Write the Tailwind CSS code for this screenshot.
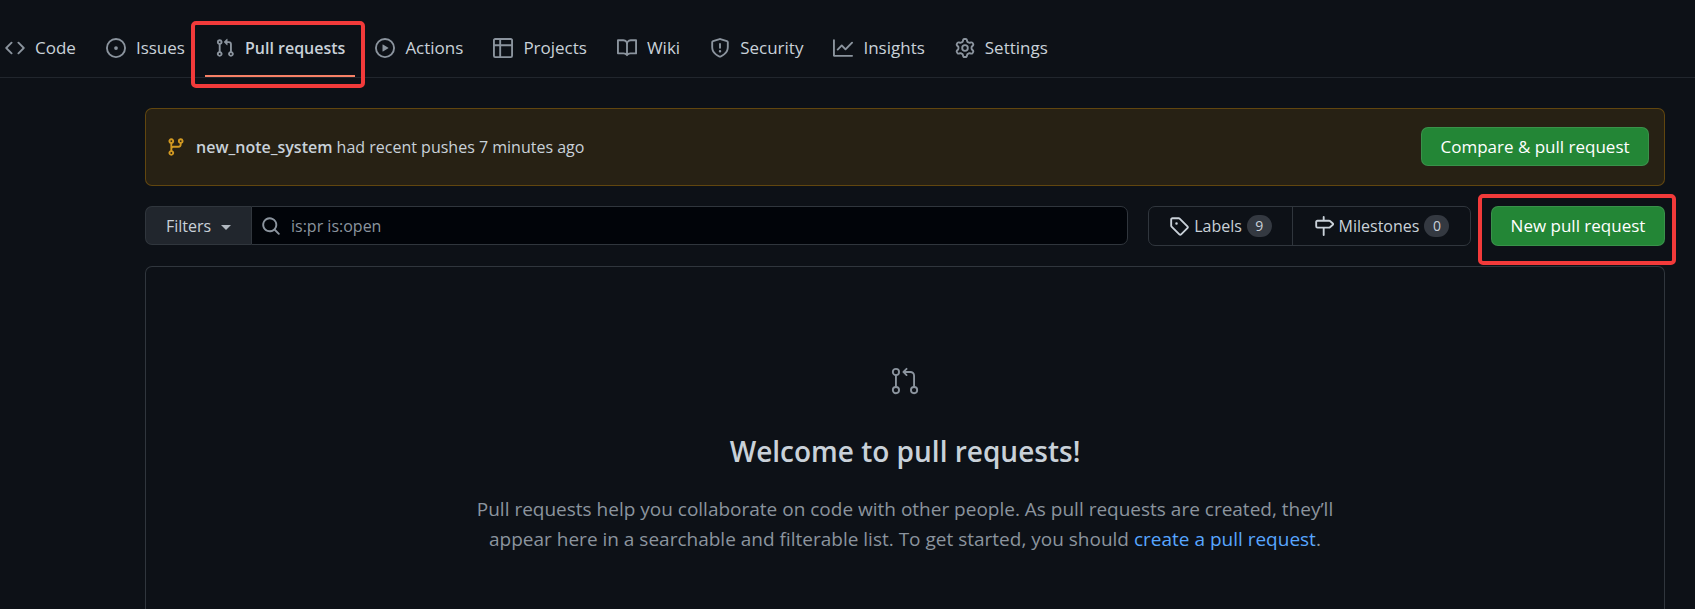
<!DOCTYPE html>
<html lang="en">
<head>
<meta charset="utf-8">
<meta name="viewport" content="width=device-width, initial-scale=1">
<title>Pull requests</title>
<script src="https://cdn.jsdelivr.net/npm/@tailwindcss/browser@4"></script>
</head>
<body class="flex min-h-screen flex-col bg-[#0d1117] font-['Open_Sans','Noto_Sans',sans-serif] text-base text-[#c9d1d9]">

<nav aria-label="Repository" class="-ml-[5px] flex items-end gap-[10px] border-b border-[#21262d] pt-[19px] text-[17px] whitespace-nowrap">
  <a href="#" class="flex h-[58px] items-center gap-[10px] px-[10px]">
    <svg class="size-5 fill-[#8b949e]" viewBox="0 0 16 16" aria-hidden="true"><path d="M4.72 3.22a.75.75 0 011.06 1.06L2.06 8l3.72 3.72a.75.75 0 11-1.06 1.06L.47 8.53a.75.75 0 010-1.06l4.25-4.25zm6.56 0a.75.75 0 10-1.06 1.06L13.94 8l-3.72 3.72a.75.75 0 101.06 1.06l4.25-4.25a.75.75 0 000-1.06l-4.25-4.25z"/></svg>
    <span>Code</span>
  </a>
  <a href="#" class="flex h-[58px] items-center gap-[10px] px-[10px]">
    <svg class="size-5 fill-[#8b949e]" viewBox="0 0 16 16" aria-hidden="true"><path d="M8 9.5a1.5 1.5 0 100-3 1.5 1.5 0 000 3z"/><path fill-rule="evenodd" d="M8 0a8 8 0 100 16A8 8 0 008 0zM1.5 8a6.5 6.5 0 1113 0 6.5 6.5 0 01-13 0z"/></svg>
    <span>Issues</span>
  </a>
  <a href="#" aria-current="page" class="relative flex h-[58px] items-center gap-[10px] px-[10px] text-base font-semibold">
    <svg class="size-5 fill-[#8b949e]" viewBox="0 0 16 16" aria-hidden="true"><path fill-rule="evenodd" d="M7.177 3.073L9.573.677A.25.25 0 0110 .854v4.792a.25.25 0 01-.427.177L7.177 3.427a.25.25 0 010-.354zM3.75 2.5a.75.75 0 100 1.5.75.75 0 000-1.5zm-2.25.75a2.25 2.25 0 113 2.122v5.256a2.251 2.251 0 11-1.5 0V5.372A2.25 2.25 0 011.5 3.25zM11 2.5h-1V4h1a1 1 0 011 1v5.628a2.251 2.251 0 101.5 0V5A2.5 2.5 0 0011 2.5zm1 10.25a.75.75 0 111.5 0 .75.75 0 01-1.5 0zM3.75 12a.75.75 0 100 1.5.75.75 0 000-1.5z"/></svg>
    <span>Pull requests</span>
    <span class="absolute inset-x-0 bottom-0 h-[2px] bg-[#f78166]"></span>
    <span class="absolute top-[2px] -right-[10px] -bottom-[11px] -left-[14px] rounded-[5px] border-4 border-[#f23a3a]"></span>
  </a>
  <a href="#" class="flex h-[58px] items-center gap-[10px] px-[10px]">
    <svg class="size-5 fill-[#8b949e]" viewBox="0 0 16 16" aria-hidden="true"><path fill-rule="evenodd" d="M1.5 8a6.5 6.5 0 1113 0 6.5 6.5 0 01-13 0zM8 0a8 8 0 100 16A8 8 0 008 0zM6.379 5.227A.25.25 0 006 5.442v5.117a.25.25 0 00.379.214l4.264-2.559a.25.25 0 000-.428L6.379 5.227z"/></svg>
    <span>Actions</span>
  </a>
  <a href="#" class="flex h-[58px] items-center gap-[10px] px-[10px]">
    <svg class="size-5 fill-[#8b949e]" viewBox="0 0 16 16" aria-hidden="true"><path fill-rule="evenodd" d="M0 1.75C0 .784.784 0 1.75 0h12.5C15.216 0 16 .784 16 1.75v3.585a.746.746 0 010 .83v8.085A1.75 1.75 0 0114.25 16H6.309a.748.748 0 01-1.118 0H1.75A1.75 1.75 0 010 14.25V6.165a.746.746 0 010-.83V1.75zM1.5 6.5v7.75c0 .138.112.25.25.25H5v-8H1.5zM5 5H1.5V1.75a.25.25 0 01.25-.25H5V5zm1.5 1.5v8h7.75a.25.25 0 00.25-.25V6.5h-8zm8-1.5h-8V1.5h7.75a.25.25 0 01.25.25V5z"/></svg>
    <span>Projects</span>
  </a>
  <a href="#" class="flex h-[58px] items-center gap-[10px] px-[10px]">
    <svg class="size-5 fill-[#8b949e]" viewBox="0 0 16 16" aria-hidden="true"><path fill-rule="evenodd" d="M0 1.75A.75.75 0 01.75 1h4.253c1.227 0 2.317.59 3 1.501A3.744 3.744 0 0111.006 1h4.245a.75.75 0 01.75.75v10.5a.75.75 0 01-.75.75h-4.507a2.25 2.25 0 00-1.591.659l-.622.621a.75.75 0 01-1.06 0l-.622-.621A2.25 2.25 0 005.258 13H.75a.75.75 0 01-.75-.75V1.75zm8.755 3a2.25 2.25 0 012.25-2.25H14.5v9h-3.757c-.71 0-1.4.201-1.992.572l.004-7.322zm-1.504 7.324l.004-5.073-.002-2.253A2.25 2.25 0 005.003 2.5H1.5v9h3.757a3.75 3.75 0 011.994.574z"/></svg>
    <span>Wiki</span>
  </a>
  <a href="#" class="flex h-[58px] items-center gap-[10px] px-[10px]">
    <svg class="size-5 fill-[#8b949e]" viewBox="0 0 16 16" aria-hidden="true"><path fill-rule="evenodd" d="M7.467.133a1.75 1.75 0 011.066 0l5.25 1.68A1.75 1.75 0 0115 3.48V7c0 1.566-.32 3.182-1.303 4.682-.983 1.498-2.585 2.813-5.032 3.855a1.7 1.7 0 01-1.33 0c-2.447-1.042-4.049-2.357-5.032-3.855C1.32 10.182 1 8.566 1 7V3.48a1.75 1.75 0 011.217-1.667l5.25-1.68zm.61 1.429a.25.25 0 00-.153 0l-5.25 1.68a.25.25 0 00-.174.238V7c0 1.358.275 2.666 1.057 3.86.784 1.194 2.121 2.34 4.366 3.297a.2.2 0 00.154 0c2.245-.956 3.582-2.104 4.366-3.298C13.225 9.666 13.5 8.36 13.5 7V3.48a.25.25 0 00-.174-.237l-5.25-1.68zM9 10.5a1 1 0 11-2 0 1 1 0 012 0zm-.25-5.75a.75.75 0 10-1.5 0v3a.75.75 0 001.5 0v-3z"/></svg>
    <span>Security</span>
  </a>
  <a href="#" class="flex h-[58px] items-center gap-[10px] px-[10px]">
    <svg class="size-5 fill-[#8b949e]" viewBox="0 0 16 16" aria-hidden="true"><path fill-rule="evenodd" d="M1.5 1.75a.75.75 0 00-1.5 0v12.5c0 .414.336.75.75.75h14.5a.75.75 0 000-1.5H1.5V1.75zm14.28 2.53a.75.75 0 00-1.06-1.06L10 7.94 7.53 5.47a.75.75 0 00-1.06 0L3.22 8.72a.75.75 0 001.06 1.06L7 7.06l2.47 2.47a.75.75 0 001.06 0l5.25-5.25z"/></svg>
    <span>Insights</span>
  </a>
  <a href="#" class="flex h-[58px] items-center gap-[10px] px-[10px]">
    <svg class="size-5 fill-[#8b949e]" viewBox="0 0 16 16" aria-hidden="true"><path fill-rule="evenodd" d="M8 0a8.2 8.2 0 0 1 .701.031C9.444.095 9.99.645 10.16 1.29l.288 1.107c.018.066.079.158.212.224.231.114.454.243.668.386.123.082.233.09.299.071l1.103-.303c.644-.176 1.392.021 1.82.63.27.385.506.792.704 1.218.315.675.111 1.422-.364 1.891l-.814.806c-.049.048-.098.147-.088.294.016.257.016.515 0 .772-.01.147.038.246.088.294l.814.806c.475.469.679 1.216.364 1.891a7.977 7.977 0 0 1-.704 1.217c-.428.61-1.176.807-1.82.63l-1.102-.302c-.067-.019-.177-.011-.3.071a5.909 5.909 0 0 1-.668.386c-.133.066-.194.158-.211.224l-.29 1.106c-.168.646-.715 1.196-1.458 1.26a8.006 8.006 0 0 1-1.402 0c-.743-.064-1.289-.614-1.458-1.26l-.289-1.106c-.018-.066-.079-.158-.212-.224a5.738 5.738 0 0 1-.668-.386c-.123-.082-.233-.09-.299-.071l-1.103.303c-.644.176-1.392-.021-1.82-.63a8.12 8.12 0 0 1-.704-1.218c-.315-.675-.111-1.422.363-1.891l.815-.806c.05-.048.098-.147.088-.294a6.214 6.214 0 0 1 0-.772c.01-.147-.038-.246-.088-.294l-.815-.806C.635 6.045.431 5.298.746 4.623a7.92 7.92 0 0 1 .704-1.217c.428-.61 1.176-.807 1.82-.63l1.102.302c.067.019.177.011.3-.071.214-.143.437-.272.668-.386.133-.066.194-.158.211-.224l.29-1.106C6.009.645 6.556.095 7.299.03 7.53.01 7.764 0 8 0Zm-.571 1.525c-.036.003-.108.036-.137.146l-.289 1.105c-.147.561-.549.967-.998 1.189-.173.086-.34.183-.5.29-.417.278-.97.423-1.529.27l-1.103-.303c-.109-.03-.175.016-.195.045-.22.312-.412.644-.573.99-.014.031-.021.11.059.19l.815.806c.411.406.562.957.53 1.456a4.709 4.709 0 0 0 0 .582c.032.499-.119 1.05-.53 1.456l-.815.806c-.081.08-.073.159-.059.19.162.346.353.677.573.989.02.03.085.076.195.046l1.102-.303c.56-.153 1.113-.008 1.53.27.161.107.328.204.501.29.447.222.85.629.997 1.189l.289 1.105c.029.109.101.143.137.146a6.6 6.6 0 0 0 1.142 0c.036-.003.108-.036.137-.146l.289-1.105c.147-.561.549-.967.998-1.189.173-.086.34-.183.5-.29.417-.278.97-.423 1.529-.27l1.103.303c.109.029.175-.016.195-.045.22-.313.411-.644.573-.99.014-.031.021-.11-.059-.19l-.815-.806c-.411-.406-.562-.957-.53-1.456a4.709 4.709 0 0 0 0-.582c-.032-.499.119-1.05.53-1.456l.815-.806c.081-.08.073-.159.059-.19a6.464 6.464 0 0 0-.573-.989c-.02-.03-.085-.076-.195-.046l-1.102.303c-.56.153-1.113.008-1.53-.27a4.44 4.44 0 0 0-.501-.29c-.447-.222-.85-.629-.997-1.189l-.289-1.105c-.029-.11-.101-.143-.137-.146a6.6 6.6 0 0 0-1.142 0ZM11 8a3 3 0 1 1-6 0 3 3 0 0 1 6 0ZM9.5 8a1.5 1.5 0 1 0-3.001.001A1.5 1.5 0 0 0 9.5 8Z"/></svg>
    <span>Settings</span>
  </a>
</nav>

<main class="mr-[30px] ml-[145px] flex grow flex-col gap-5 pt-[30px]">
  <section class="flex items-center gap-[10px] rounded-[7px] border border-[#bb8009]/40 bg-[#bb8009]/15 pt-[18px] pr-[15px] pb-[19px] pl-5">
    <svg class="size-5 fill-[#d29922]" viewBox="0 0 16 16" aria-hidden="true"><path fill-rule="evenodd" d="M11.75 2.5a.75.75 0 100 1.5.75.75 0 000-1.5zm-2.25.75a2.25 2.25 0 113 2.122V6A2.5 2.5 0 0110 8.5H6a1 1 0 00-1 1v1.128a2.251 2.251 0 11-1.5 0V5.372a2.25 2.25 0 111.5 0v1.836A2.492 2.492 0 016 7h4a1 1 0 001-1v-.628A2.25 2.25 0 019.5 3.25zM4.25 12a.75.75 0 100 1.5.75.75 0 000-1.5zM3.5 3.25a.75.75 0 111.5 0 .75.75 0 01-1.5 0z"/></svg>
    <p class="grow"><strong class="font-semibold">new_note_system</strong> had recent pushes 7 minutes ago</p>
    <button type="button" class="h-[39px] w-[228px] rounded-[7px] border border-white/10 bg-[#238636] text-[17px] text-white">Compare &amp; pull request</button>
  </section>

  <div class="flex items-start gap-5">
    <form class="flex h-[39px] grow" onsubmit="return false">
      <button type="button" class="flex w-[106px] items-center justify-center gap-[10px] rounded-l-[7px] border border-r-0 border-[#30363d] bg-[#21262d]">
        Filters
        <span class="mt-1 border-x-[5px] border-t-[5px] border-x-transparent border-t-[#b1b8c0]"></span>
      </button>
      <div class="flex grow items-center gap-[10px] rounded-r-[7px] border border-[#30363d] bg-[#010409] px-[9px]">
        <svg class="size-5 fill-[#8b949e]" viewBox="0 0 16 16" aria-hidden="true"><path fill-rule="evenodd" d="M11.5 7a4.499 4.499 0 11-8.998 0A4.499 4.499 0 0111.5 7zm-.82 4.74a6 6 0 111.06-1.06l3.04 3.04a.75.75 0 11-1.06 1.06l-3.04-3.04z"/></svg>
        <input type="text" aria-label="Search all pull requests" value="is:pr is:open" class="h-full grow bg-transparent text-[#8b949e] outline-none">
      </div>
    </form>
    <div class="flex h-10 rounded-[7px] border border-[#30363d]">
      <a href="#" class="flex w-[144px] items-center justify-center gap-[5px] border-r border-[#30363d]">
        <svg class="size-5 fill-[#c9d1d9]" viewBox="0 0 16 16" aria-hidden="true"><path fill-rule="evenodd" d="M2.5 7.775V2.75a.25.25 0 01.25-.25h5.025a.25.25 0 01.177.073l6.25 6.25a.25.25 0 010 .354l-5.025 5.025a.25.25 0 01-.354 0l-6.25-6.25a.25.25 0 01-.073-.177zm-1.5 0V2.75C1 1.784 1.784 1 2.75 1h5.025c.464 0 .91.184 1.238.513l6.25 6.25a1.75 1.75 0 010 2.474l-5.026 5.026a1.75 1.75 0 01-2.474 0l-6.25-6.25A1.75 1.75 0 011 7.775zM6 5a1 1 0 100 2 1 1 0 000-2z"/></svg>
        Labels
        <span class="flex h-[22px] w-[25px] items-center justify-center rounded-full bg-[#343941] text-sm">9</span>
      </a>
      <a href="#" class="flex w-[177px] items-center justify-center gap-[5px]">
        <svg class="size-5 fill-[#c9d1d9]" viewBox="0 0 16 16" aria-hidden="true"><path fill-rule="evenodd" d="M7.75 0a.75.75 0 01.75.75V3h3.634c.414 0 .814.147 1.13.414l2.07 1.75a1.75 1.75 0 010 2.672l-2.07 1.75a1.75 1.75 0 01-1.13.414H8.5v5.25a.75.75 0 11-1.5 0V10H2.75A1.75 1.75 0 011 8.25v-3.5C1 3.784 1.784 3 2.75 3H7V.75A.75.75 0 017.75 0zm0 8.5h4.384a.25.25 0 00.161-.06l2.07-1.75a.25.25 0 000-.38l-2.07-1.75a.25.25 0 00-.161-.06H2.75a.25.25 0 00-.25.25v3.5c0 .138.112.25.25.25h5z"/></svg>
        Milestones
        <span class="flex h-[22px] w-[25px] items-center justify-center rounded-full bg-[#343941] text-sm">0</span>
      </a>
    </div>
    <div class="relative">
      <button type="button" class="block h-10 w-[174px] rounded-[7px] border border-white/10 bg-[#238636] text-[17px] text-white">New pull request</button>
      <span class="pointer-events-none absolute -top-3 -right-[11px] -bottom-[19px] -left-[13px] rounded-[5px] border-4 border-[#f23a3a]"></span>
    </div>
  </div>

  <section class="flex grow flex-col items-center rounded-t-[7px] border border-b-0 border-[#30363d] px-10 pt-[99px] text-center">
    <svg class="size-[30px] fill-none stroke-[#8b949e] stroke-[1.5]" viewBox="0 0 24 24" stroke-linecap="round" stroke-linejoin="round" aria-hidden="true"><circle cx="4.75" cy="4.75" r="2.5"/><circle cx="4.75" cy="19.25" r="2.5"/><circle cx="19.25" cy="19.25" r="2.5"/><path d="M4.75 7.25v9.5M19.25 16.75V7.75a3 3 0 0 0-3-3H10.75M13.25 2.25l-2.5 2.5 2.5 2.5"/></svg>
    <h1 class="mt-[33px] text-[28px] leading-[45px] font-semibold">Welcome to pull requests!</h1>
    <p class="mt-5 max-w-[880px] text-[19px] leading-[30px] text-[#8b949e]">Pull requests help you collaborate on code with other people. As pull requests are created, they’ll<br>appear here in a searchable and filterable list. To get started, you should <a href="#" class="text-[#58a6ff]">create a pull request</a>.</p>
  </section>
</main>
</body>
</html>
